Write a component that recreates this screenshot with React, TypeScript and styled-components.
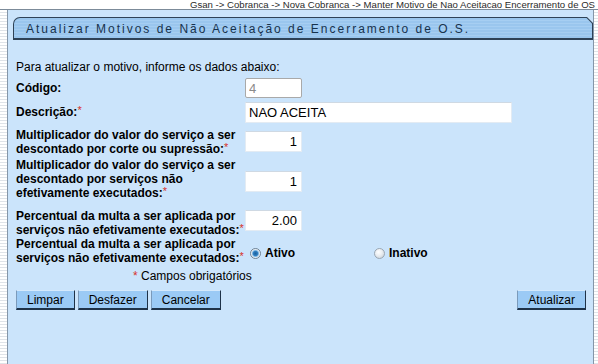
import styled, { createGlobalStyle } from "styled-components";

const GlobalStyle = createGlobalStyle`
  html, body {
    margin: 0;
    padding: 0;
    background: #ffffff;
  }
  body {
    font-family: "Liberation Sans", Arial, sans-serif;
  }
`;

const Page = styled.div`
  width: 598px;
  height: 364px;
  display: flex;
  flex-direction: column;
  overflow: hidden;
`;

const Breadcrumb = styled.div`
  height: 9px;
  border-bottom: 1px solid #7c8b99;
  padding-right: 3px;
  font-size: 9.6px;
  line-height: 9px;
  color: #2b2b2b;
  text-align: right;
  white-space: nowrap;
  overflow: hidden;
`;

const Frame = styled.div`
  flex: 1;
  display: flex;
  background: repeating-linear-gradient(
    to bottom,
    #ffffff 0px,
    #ffffff 2px,
    #dfe3e8 2px,
    #dfe3e8 3px
  );
`;

const Gutter = styled.div<{ $w: number }>`
  width: ${(p) => p.$w}px;
  flex-shrink: 0;
`;

const Panel = styled.div`
  flex: 1;
  display: flex;
  flex-direction: column;
  background: #cbe4fb;
  border-left: 1px solid #8596a8;
  border-right: 1px solid #8596a8;
  padding: 7px 0 0 5px;
`;

const Tab = styled.div`
  height: 23px;
  box-sizing: border-box;
  padding: 1px 1px 2px 1px;
  background: #2e4257;
  border-top-left-radius: 7px;
  clip-path: polygon(0 0, calc(100% - 6px) 0, 100% 6px, 100% 100%, 0 100%);
`;

const TabFace = styled.div`
  height: 100%;
  display: flex;
  align-items: center;
  padding: 1px 0 0 12px;
  box-sizing: border-box;
  border-top-left-radius: 6px;
  clip-path: polygon(0 0, calc(100% - 5.5px) 0, 100% 5.5px, 100% 100%, 0 100%);
  background: repeating-linear-gradient(
    to bottom,
    #9ac6ee 0px,
    #9ac6ee 2px,
    #a6cef2 2px,
    #a6cef2 3px
  );
  font-size: 12px;
  letter-spacing: 2px;
  color: #17324d;
  white-space: nowrap;
`;

const Form = styled.div`
  display: flex;
  flex-direction: column;
  padding: 0 7px 0 3px;
`;

const Intro = styled.div`
  margin-top: 20px;
  font-size: 12px;
  line-height: 14px;
  color: #000;
`;

const Row = styled.div<{ $mt: number }>`
  display: grid;
  grid-template-columns: 229px 1fr;
  align-items: start;
  margin-top: ${(p) => p.$mt}px;
`;

const Label = styled.div<{ $mt?: number }>`
  margin-top: ${(p) => p.$mt ?? 0}px;
  font-size: 12px;
  font-weight: bold;
  line-height: 14px;
  color: #000;
  white-space: nowrap;
`;

const Req = styled.span`
  position: relative;
  top: -2px;
  color: #d8322b;
  font-weight: normal;
  font-size: 11px;
  line-height: 0;
`;

const Field = styled.input<{ $w: number; $h?: number; $mt?: number; $right?: boolean }>`
  display: block;
  box-sizing: border-box;
  width: ${(p) => p.$w}px;
  height: ${(p) => p.$h ?? 21}px;
  margin: ${(p) => p.$mt ?? 0}px 0 0 0;
  padding: 0 ${(p) => (p.$right ? 4 : 3)}px;
  border: 1px solid #e3ebf3;
  border-top-color: #cfd9e3;
  background: #ffffff;
  font: 13px "Liberation Sans", Arial, sans-serif;
  color: #000;
  text-align: ${(p) => (p.$right ? "right" : "left")};
  outline: none;

  &:disabled {
    color: #8a8a8a;
    border-color: #a9a9a9;
    border-radius: 2px;
    background: #ffffff;
  }
`;

const Choices = styled.div`
  display: grid;
  grid-template-columns: 124px auto;
  margin-top: 9px;
  padding-left: 5px;
`;

const Choice = styled.label`
  display: flex;
  align-items: center;
  gap: 4px;
  font-size: 12px;
  font-weight: bold;
  line-height: 14px;
  color: #000;
`;

const Radio = styled.input.attrs({ type: "radio" })`
  appearance: none;
  width: 11px;
  height: 11px;
  margin: 0;
  border-radius: 50%;
  border: 1px solid #9aa6b2;
  background: radial-gradient(circle at 40% 35%, #ffffff 0, #e9edf1 45%, #c3cbd3 100%);

  &:checked {
    border-color: #6f8294;
    background: radial-gradient(
      circle at 50% 50%,
      #1d5f9c 0,
      #2f7fc0 2.2px,
      #8fbfe6 3.2px,
      #f1f5f8 4.2px
    );
  }
`;

const Note = styled.div`
  margin-top: 4px;
  padding-left: 117px;
  font-size: 12px;
  line-height: 14px;
  color: #000;
`;

const Star = styled.span`
  color: #d8322b;
`;

const Actions = styled.div`
  display: flex;
  justify-content: space-between;
  margin-top: 7px;
`;

const Group = styled.div`
  display: flex;
  gap: 3px;
`;

const Button = styled.button`
  height: 20px;
  box-sizing: border-box;
  padding: 0 10px;
  border: 1px solid;
  border-bottom-width: 2px;
  border-color: #d4e9fc #1e3248 #1e3248 #7b9aba;
  background: #9bcaf5;
  font: 12px "Liberation Sans", Arial, sans-serif;
  color: #000;
  line-height: 1;
  cursor: pointer;
`;

const App = () => {
  return (
    <>
      <GlobalStyle />
      <Page>
        <Breadcrumb>
          Gsan -&gt; Cobranca -&gt; Nova Cobranca -&gt; Manter Motivo de Nao Aceitacao
          Encerramento de OS
        </Breadcrumb>
        <Frame>
          <Gutter $w={7} />
          <Panel>
            <Tab>
              <TabFace>Atualizar Motivos de Não Aceitação de Encerramento de O.S.</TabFace>
            </Tab>
            <Form>
              <Intro>Para atualizar o motivo, informe os dados abaixo:</Intro>

              <Row $mt={4}>
                <Label $mt={3}>Código:</Label>
                <Field $w={57} $h={20} value="4" disabled readOnly />
              </Row>

              <Row $mt={4}>
                <Label $mt={3}>
                  Descrição:<Req>*</Req>
                </Label>
                <Field $w={267} defaultValue="NAO ACEITA" />
              </Row>

              <Row $mt={5}>
                <Label>
                  Multiplicador do valor do serviço a ser
                  <br />
                  descontado por corte ou supressão:<Req>*</Req>
                </Label>
                <Field $w={57} $mt={3} $right defaultValue="1" />
              </Row>

              <Row $mt={2}>
                <Label>
                  Multiplicador do valor do serviço a ser
                  <br />
                  descontado por serviços não
                  <br />
                  efetivamente executados:<Req>*</Req>
                </Label>
                <Field $w={57} $mt={13} $right defaultValue="1" />
              </Row>

              <Row $mt={9}>
                <Label>
                  Percentual da multa a ser aplicada por
                  <br />
                  serviços não efetivamente executados:<Req>*</Req>
                </Label>
                <Field $w={57} $mt={1} $right defaultValue="2.00" />
              </Row>

              <Row $mt={0}>
                <Label>
                  Percentual da multa a ser aplicada por
                  <br />
                  serviços não efetivamente executados:<Req>*</Req>
                </Label>
                <Choices>
                  <Choice>
                    <Radio name="situacao" defaultChecked />
                    Ativo
                  </Choice>
                  <Choice>
                    <Radio name="situacao" />
                    Inativo
                  </Choice>
                </Choices>
              </Row>

              <Note>
                <Star>*</Star> Campos obrigatórios
              </Note>

              <Actions>
                <Group>
                  <Button>Limpar</Button>
                  <Button>Desfazer</Button>
                  <Button>Cancelar</Button>
                </Group>
                <Button>Atualizar</Button>
              </Actions>
            </Form>
          </Panel>
          <Gutter $w={4} />
        </Frame>
      </Page>
    </>
  );
};

export default App;
